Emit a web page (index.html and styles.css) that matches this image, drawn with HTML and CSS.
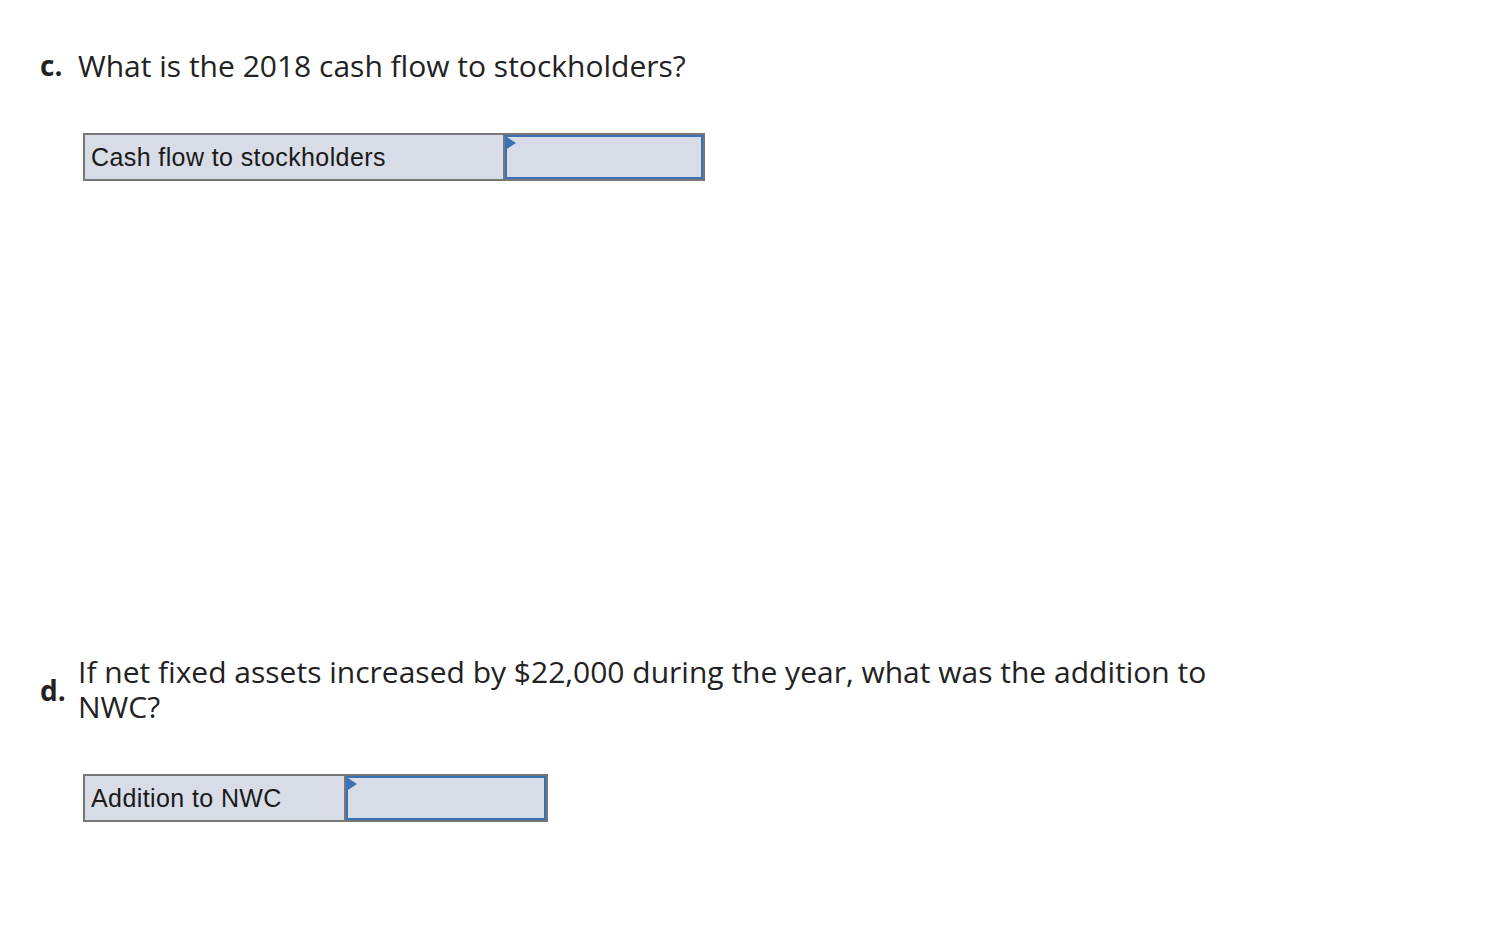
FILE: index.html
```html
<!DOCTYPE html>
<html>
<head>
<meta charset="utf-8">
<link rel="stylesheet" href="styles.css">
</head>
<body>
<div class="page">
  <section class="part part-c">
    <div class="question">
      <span class="letter">c.</span>
      <span class="qtext">What is the 2018 cash flow to stockholders?</span>
    </div>
    <div class="answer-table">
      <div class="label-cell label-c">Cash flow to stockholders</div>
      <div class="input-cell"><span class="flag"></span></div>
    </div>
  </section>
  <section class="part part-d">
    <div class="question question-d">
      <span class="letter">d.</span>
      <span class="qtext qtext-d">If net fixed assets increased by $22,000 during the year, what was the addition to NWC?</span>
    </div>
    <div class="answer-table">
      <div class="label-cell label-d">Addition to NWC</div>
      <div class="input-cell input-d"><span class="flag"></span></div>
    </div>
  </section>
</div>
</body>
</html>
```

FILE: styles.css
```css
html, body {
  margin: 0;
  padding: 0;
  background: #ffffff;
}
.page {
  padding: 48px 0 0 40px;
  font-family: "Open Sans", Lato, sans-serif;
  color: #222222;
}
.question {
  display: flex;
  align-items: center;
  font-size: 30px;
  line-height: 35px;
}
.letter {
  font-weight: 700;
  font-size: 28px;
  width: 38px;
  flex: none;
}
.question-d .letter {
  padding-top: 2px;
}
.qtext-d {
  width: 1160px;
}
.answer-table {
  display: flex;
  margin-left: 43px;
  width: max-content;
  border: 2px solid #777777;
  background: #d8dce6;
  height: 44px;
}
.part-c .answer-table {
  margin-top: 50px;
}
.part-d {
  margin-top: 473px;
}
.part-d .answer-table {
  margin-top: 50px;
}
.label-cell {
  box-sizing: border-box;
  border-right: 2px solid #777777;
  font-family: "Liberation Sans", Arial, sans-serif;
  font-size: 25px;
  letter-spacing: 0.4px;
  line-height: 44px;
  padding-left: 6px;
  color: #1a1a1a;
}
.label-c { width: 420px; }
.label-d { width: 261px; }
.input-cell {
  position: relative;
  box-sizing: border-box;
  width: 198px;
  height: 44px;
  border: 2px solid #3a72b8;
}
.input-d { width: 200px; }
.flag {
  position: absolute;
  left: 0;
  top: 0;
  width: 0;
  height: 0;
  border-top: 6.5px solid transparent;
  border-bottom: 6.5px solid transparent;
  border-left: 9px solid #3a72b8;
}
```
